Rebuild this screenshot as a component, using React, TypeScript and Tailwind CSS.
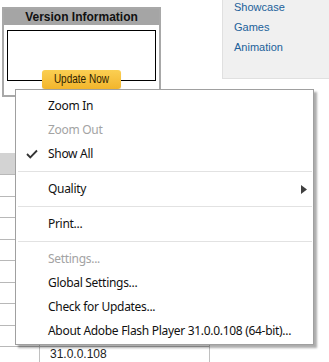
import React from "react";

type Item =
  | { kind: "item"; label: string; disabled?: boolean; checked?: boolean; submenu?: boolean }
  | { kind: "sep" };

const menu: Item[] = [
  { kind: "item", label: "Zoom In" },
  { kind: "item", label: "Zoom Out", disabled: true },
  { kind: "item", label: "Show All", checked: true },
  { kind: "sep" },
  { kind: "item", label: "Quality", submenu: true },
  { kind: "sep" },
  { kind: "item", label: "Print..." },
  { kind: "sep" },
  { kind: "item", label: "Settings...", disabled: true },
  { kind: "item", label: "Global Settings..." },
  { kind: "item", label: "Check for Updates..." },
  { kind: "item", label: "About Adobe Flash Player 31.0.0.108 (64-bit)..." },
];

function Check() {
  return (
    <svg width="12" height="10" viewBox="0 0 12 10" className="text-[#333]">
      <path d="M1 5 L4.3 8.4 L11 1.5" fill="none" stroke="currentColor" strokeWidth="1.8" />
    </svg>
  );
}

function ContextMenu() {
  return (
    <div className="absolute left-[15px] top-[89px] w-[299px] border border-[#a0a0a0] bg-white pt-[4px] pb-[1px] shadow-[3px_3px_2px_rgba(0,0,0,0.32)] font-['Noto_Sans',sans-serif] text-[12px]">
      {menu.map((it, i) =>
        it.kind === "sep" ? (
          <div key={i} className="py-[5px] pl-[2px] pr-[1px]">
            <div className="h-px bg-[#e2e2e2]" />
          </div>
        ) : (
          <div
            key={i}
            className={`flex h-[24px] items-center ${it.disabled ? "text-[#a3a3a3]" : "text-[#111]"}`}
          >
            <span className="flex w-[32px] justify-center">{it.checked && <Check />}</span>
            <span className="tracking-[-0.3px]">{it.label}</span>
            {it.submenu && (
              <svg width="6" height="9" viewBox="0 0 6 9" className="ml-auto mr-[6px]">
                <path d="M0 0 L6 4.5 L0 9 Z" fill="#404040" />
              </svg>
            )}
          </div>
        )
      )}
    </div>
  );
}

export default function App() {
  const rows = Array.from({ length: 8 });
  return (
    <div className="relative h-[362px] w-[329px] overflow-hidden bg-white font-['Liberation_Sans',Arial,sans-serif]">
      <div className="flex h-[97px] items-start">
        <div className="ml-[2px] mt-[7px] flex h-[90px] w-[159px] flex-col border-2 border-[#a8a8a8]">
          <div className="flex h-[16px] items-center justify-center bg-[#a5a5a5] text-[12px] font-bold text-[#111]">
            Version Information
          </div>
          <div className="ml-[3px] mt-[5px] h-[51px] w-[149px] border border-black" />
          <button className="mx-auto -mt-[11px] flex h-[19px] w-[79px] items-center justify-center rounded-[3px] bg-gradient-to-b from-[#fbcf52] to-[#f2b52a] text-[12.5px] text-[#2e2100] shadow-[0_1px_1px_rgba(0,0,0,0.15)]">
            <span className="inline-block scale-x-[0.8] whitespace-nowrap">Update Now</span>
          </button>
        </div>
        <div className="ml-auto flex h-[79px] w-[107px] flex-col border-b border-l border-[#e0e0e0] bg-[#f0f0f0] pl-[11px] text-[11px] leading-[20px] text-[#21619a]">
          <span className="-mt-[3px]">Showcase</span>
          <span>Games</span>
          <span>Animation</span>
        </div>
      </div>

      <div className="mt-[56px] w-[210px] border-r border-[#c0c0c0]">
        <div className="h-[22px] border-b border-[#b8b8b8] bg-[#d3d3d3]" />
        {rows.map((_, i) => (
          <div key={i} className="flex h-[21.5px] border-b border-[#b8b8b8]">
            <div className="w-[40px] border-r border-[#c0c0c0]" />
            <div className="flex-1" />
          </div>
        ))}
        <div className="flex h-[22px]">
          <div className="w-[40px] border-r border-[#c0c0c0]" />
          <div className="flex-1 pl-[10px] text-[12px] leading-[14px] text-[#222]">31.0.0.108</div>
        </div>
      </div>

      <ContextMenu />
    </div>
  );
}
